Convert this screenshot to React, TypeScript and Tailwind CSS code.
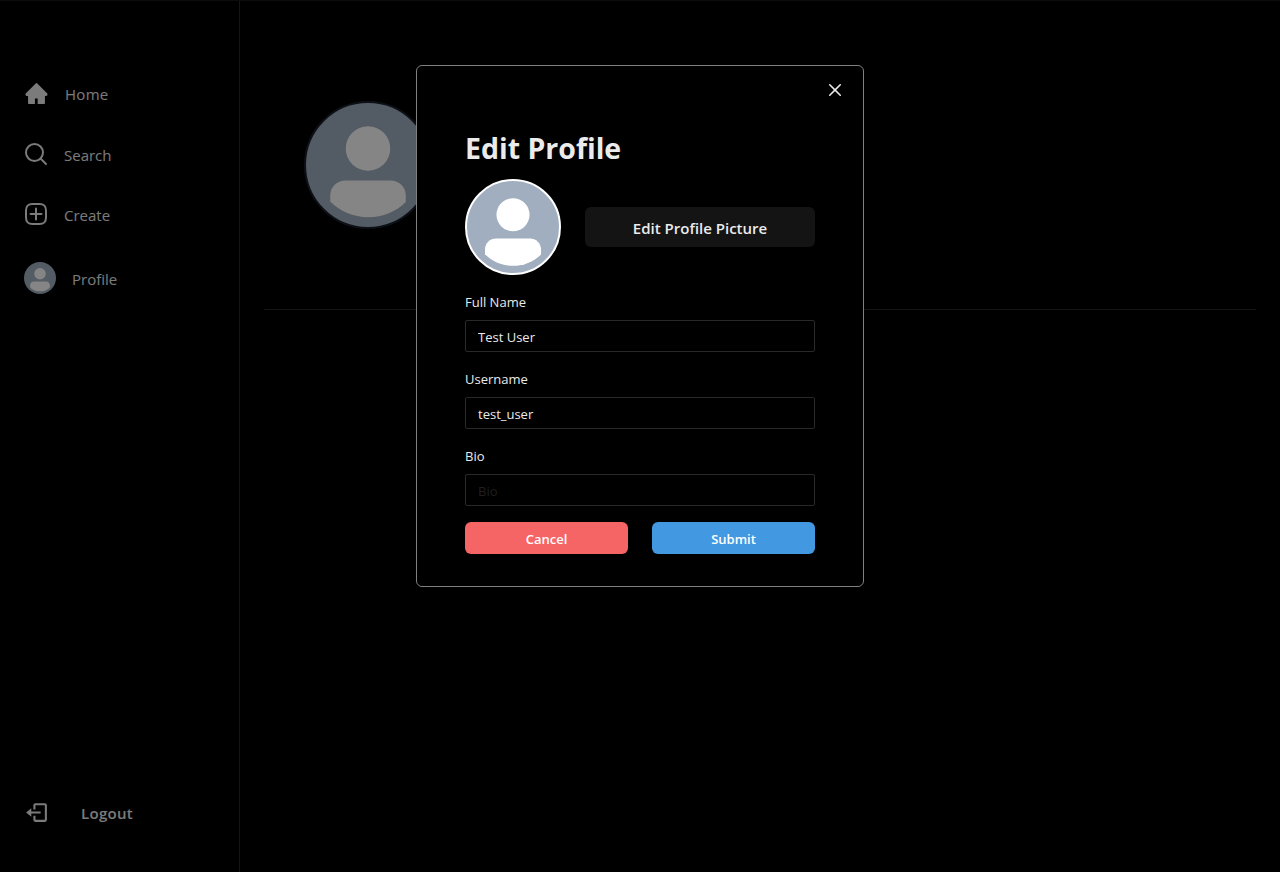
import type { ReactNode } from "react";
import { AiFillHome } from "react-icons/ai";

function Avatar({ className, small = false }: { className: string; small?: boolean }) {
  return (
    <span className={`block shrink-0 overflow-hidden rounded-full bg-[#a0aec0] ${className}`}>
      <svg viewBox="0 0 128 128" className="size-full" fill="#fff">
        {small ? (
          <path d="M40 78 H88 C98 78 104 86 104 96 C104 109 84 117 64 117 C44 117 24 109 24 96 C24 86 30 78 40 78 Z" />
        ) : (
          <path d="M103,102.1388 C93.094,111.92 79.3504,118 64.1638,118 C48.8056,118 34.9294,111.768 25,101.7892 L25,95.2 C25,86.8096 31.981,80 40.6,80 L87.4,80 C96.019,80 103,86.8096 103,95.2 L103,102.1388 Z" />
        )}
        <circle cx="64" cy="47" r="23" />
      </svg>
    </span>
  );
}

function SearchIcon() {
  return (
    <svg width="24" height="24" viewBox="0 0 24 24" fill="none" stroke="currentColor" strokeWidth="2" strokeLinecap="round">
      <path d="M19 10.5A8.5 8.5 0 1 1 10.5 2a8.5 8.5 0 0 1 8.5 8.5Z" />
      <path d="M16.511 16.511 22 22" />
    </svg>
  );
}

function CreateIcon() {
  return (
    <svg width="24" height="24" viewBox="0 0 24 24" fill="none" stroke="currentColor" strokeWidth="2" strokeLinecap="round" strokeLinejoin="round">
      <path d="M2 12v3.45c0 2.849.698 4.005 1.606 4.944.94.909 2.098 1.608 4.946 1.608h6.896c2.848 0 4.006-.7 4.946-1.608C21.302 19.455 22 18.3 22 15.45V8.552c0-2.849-.698-4.006-1.606-4.945C19.454 2.7 18.296 2 15.448 2H8.552c-2.848 0-4.006.699-4.946 1.607C2.698 4.547 2 5.703 2 8.552Z" />
      <path d="M6.545 12.001h10.91M12.003 6.545v10.91" />
    </svg>
  );
}

function LogoutIcon() {
  return (
    <svg width="25" height="25" viewBox="0 0 24 24" fill="currentColor">
      <path d="M16 13v-2H7V8l-5 4 5 4v-3z" />
      <path d="M20 3h-9c-1.103 0-2 .897-2 2v4h2V5h9v14h-9v-4H9v4c0 1.103.897 2 2 2h9c1.103 0 2-.897 2-2V5c0-1.103-.897-2-2-2z" />
    </svg>
  );
}

function Field({ label, children }: { label: string; children: ReactNode }) {
  return (
    <label className="flex flex-col gap-2">
      <span className="h-[21px] text-[13px] leading-[23px]">{label}</span>
      {children}
    </label>
  );
}

const inputClass =
  "h-8 w-full rounded-xs border border-[#292929] bg-transparent px-3 pt-0.5 text-[13px] text-[#ebebeb] outline-none placeholder:text-[#1f1f1f]";

export default function App() {
  return (
    <div className="relative flex h-[872px] w-full overflow-hidden border-t border-[#0c0c0c] bg-black font-['Open_Sans','Noto_Sans',sans-serif] text-[#ebebeb]">
      <aside className="flex w-60 shrink-0 flex-col border-r border-[#292929] px-6 pt-20 pb-[47px]">
        <nav className="flex flex-col text-[15px]">
          <a className="flex h-[25px] items-center gap-4">
            <AiFillHome size={25} />
            <span className="leading-6 tracking-[0.02em]">Home</span>
          </a>
          <a className="mt-9 flex h-6 items-center gap-4">
            <SearchIcon />
            <span className="pt-0.5 leading-6">Search</span>
          </a>
          <a className="mt-9 flex h-6 items-center gap-4">
            <CreateIcon />
            <span className="pt-0.5 leading-6">Create</span>
          </a>
          <a className="mt-9 flex h-8 items-center gap-4">
            <Avatar className="size-8" small />
            <span className="pt-0.5 leading-6">Profile</span>
          </a>
        </nav>
        <button className="mt-auto flex h-[25px] items-center gap-8 text-[15px] font-semibold">
          <LogoutIcon />
          <span className="pt-0.5 tracking-[0.02em]">Logout</span>
        </button>
      </aside>
      <main className="flex-1 px-6">
        <div className="h-[309px] border-b border-[#292929] pt-[100px] pl-10">
          <Avatar className="size-32 border-2 border-[#1a202c]" />
        </div>
      </main>

      <div className="absolute inset-0 flex items-start justify-center bg-black/48 pt-16">
        <section className="relative h-[522px] w-[448px] rounded-md border border-[#808080] bg-black px-12 pt-[63px]">
          <button aria-label="Close" className="absolute top-2 right-3 flex size-8 items-center justify-center">
            <svg width="12" height="12" viewBox="0 0 24 24" fill="currentColor">
              <path d="M.439,21.44a1.5,1.5,0,0,0,2.122,2.121L11.823,14.3a.25.25,0,0,1,.354,0l9.262,9.263a1.5,1.5,0,1,0,2.122-2.121L14.3,12.177a.25.25,0,0,1,0-.354l9.263-9.262A1.5,1.5,0,0,0,21.439.44L12.177,9.7a.25.25,0,0,1-.354,0L2.561.44A1.5,1.5,0,0,0,.439,2.561L9.7,11.823a.25.25,0,0,1,0,.354Z" />
            </svg>
          </button>
          <h1 className="h-[38px] text-[28.5px] leading-[38px] font-bold">Edit Profile</h1>
          <div className="mt-3 flex items-center gap-6">
            <Avatar className="size-24 border-2 border-white" />
            <button className="h-10 flex-1 rounded-md bg-[#141414] pt-0.5 text-[15px] font-semibold">
              <span>Edit Profile Picture</span>
            </button>
          </div>
          <form className="mt-4 flex flex-col gap-4">
            <Field label="Full Name">
              <input className={inputClass} defaultValue="Test User" />
            </Field>
            <Field label="Username">
              <input className={inputClass} defaultValue="test_user" />
            </Field>
            <Field label="Bio">
              <input className={inputClass} placeholder="Bio" />
            </Field>
            <div className="flex gap-6 text-[13px] font-semibold text-white">
              <button type="button" className="h-8 flex-1 rounded-md bg-[#f56565] pt-[3px]">
                <span>Cancel</span>
              </button>
              <button type="button" className="h-8 flex-1 rounded-md bg-[#4299e1] pt-[3px]">
                <span>Submit</span>
              </button>
            </div>
          </form>
        </section>
      </div>
    </div>
  );
}
